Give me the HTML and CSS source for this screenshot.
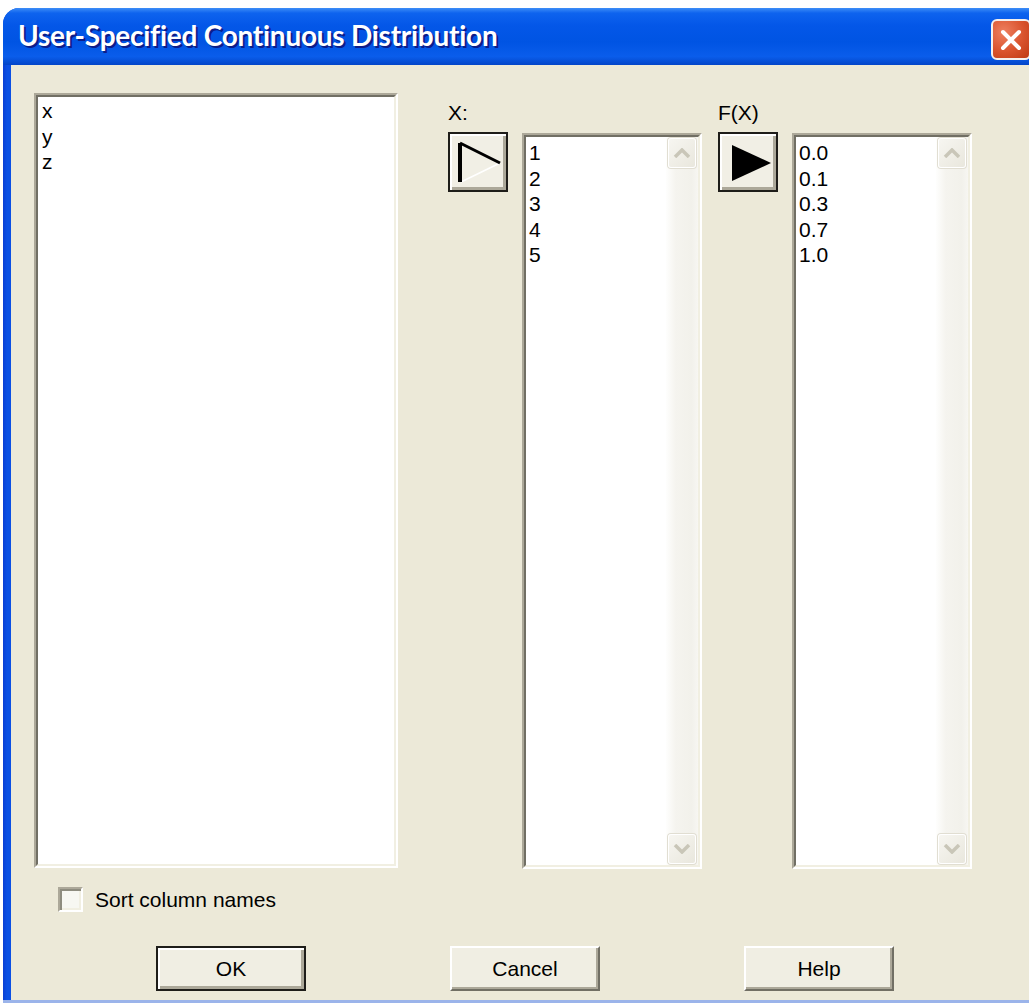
FILE: index.html
```html
<!DOCTYPE html>
<html lang="en">
<head>
<meta charset="utf-8">
<title>User-Specified Continuous Distribution</title>
<link rel="stylesheet" href="styles.css">
</head>
<body>
<div class="window">
  <div class="titlebar">
    <span class="title">User-Specified Continuous Distribution</span>
    <button class="close" aria-label="Close">
      <svg width="24" height="24" viewBox="0 0 24 24"><path d="M4 4 L20 20 M20 4 L4 20" stroke="#fff" stroke-width="4" stroke-linecap="round"/></svg>
    </button>
  </div>

  <div class="client">
    <div class="lists">
      <div class="well names">
        <div class="well-in">
          <div class="items items-names">
            <div class="item">x</div>
            <div class="item">y</div>
            <div class="item">z</div>
          </div>
        </div>
      </div>

      <div class="field field-x">
        <div class="label">X:</div>
        <div class="field-row">
          <button class="pick" aria-label="Select X">
            <svg width="56" height="56" viewBox="0 0 56 56">
              <path d="M11 48 L50 29" stroke="#fff" stroke-width="1.5"/>
              <path d="M10 9 L10 48" stroke="#000" stroke-width="4"/>
              <path d="M10 9 L50 29" stroke="#000" stroke-width="3"/>
            </svg>
          </button>
          <div class="well values">
            <div class="well-in">
              <div class="items items-values">
                <div class="item">1</div>
                <div class="item">2</div>
                <div class="item">3</div>
                <div class="item">4</div>
                <div class="item">5</div>
              </div>
              <div class="scrollbar">
                <div class="sb-btn"><svg width="18" height="10" viewBox="0 0 18 10"><polyline points="2,9 9,2 16,9" fill="none" stroke="#C9C6B8" stroke-width="3.5"/></svg></div>
                <div class="sb-btn"><svg width="18" height="10" viewBox="0 0 18 10"><polyline points="2,1 9,8 16,1" fill="none" stroke="#C9C6B8" stroke-width="3.5"/></svg></div>
              </div>
            </div>
          </div>
        </div>
      </div>

      <div class="field field-f">
        <div class="label">F(X)</div>
        <div class="field-row">
          <button class="pick" aria-label="Select F(X)">
            <svg width="56" height="56" viewBox="0 0 56 56">
              <path d="M12 11 L51 29 L12 47 Z" fill="#000"/>
            </svg>
          </button>
          <div class="well values">
            <div class="well-in">
              <div class="items items-values">
                <div class="item">0.0</div>
                <div class="item">0.1</div>
                <div class="item">0.3</div>
                <div class="item">0.7</div>
                <div class="item">1.0</div>
              </div>
              <div class="scrollbar">
                <div class="sb-btn"><svg width="18" height="10" viewBox="0 0 18 10"><polyline points="2,9 9,2 16,9" fill="none" stroke="#C9C6B8" stroke-width="3.5"/></svg></div>
                <div class="sb-btn"><svg width="18" height="10" viewBox="0 0 18 10"><polyline points="2,1 9,8 16,1" fill="none" stroke="#C9C6B8" stroke-width="3.5"/></svg></div>
              </div>
            </div>
          </div>
        </div>
      </div>
    </div>

    <label class="sort">
      <span class="check"></span>
      <span>Sort column names</span>
    </label>

    <div class="actions">
      <button class="btn btn-default">OK</button>
      <button class="btn">Cancel</button>
      <button class="btn">Help</button>
    </div>
  </div>
  <div class="frame-bottom"></div>
</div>
</body>
</html>
```
FILE: styles.css
```css
html, body {
  margin: 0;
  height: 100%;
  overflow: hidden;
  background: #fff;
}

body {
  font-family: "Liberation Sans", Arial, sans-serif;
  font-size: 21px;
  color: #000;
}

button {
  font: inherit;
  color: inherit;
  padding: 0;
  margin: 0;
}

/* window frame */
.window {
  margin: 8px -14px 0 3px;
  background: linear-gradient(to right, #0A3FD4, #0B50E4 4px);
  border-radius: 16px 16px 0 0;
}

.titlebar {
  height: 57px;
  box-sizing: border-box;
  display: flex;
  align-items: center;
  padding: 0 12px 4px 15px;
  border-radius: 16px 16px 0 0;
  background: linear-gradient(#3D8DF7 0%, #0E63EE 9%, #0457E8 30%, #0054E3 60%, #0A5DEB 85%, #0345C8 100%);
}

.title {
  font-family: Lato, "Liberation Sans", sans-serif;
  font-weight: 700;
  font-size: 28px;
  letter-spacing: -0.25px;
  color: #fff;
  text-shadow: 2px 2px 0 #0C1D8A;
  white-space: nowrap;
}

.close {
  margin-left: auto;
  align-self: flex-start;
  margin-top: 11px;
  width: 40px;
  height: 41px;
  box-sizing: border-box;
  border: 2px solid #F4F0EE;
  border-radius: 6px;
  background: radial-gradient(circle at 30% 30%, #EE8060, #D9532D 55%, #BF3A14);
  display: flex;
  align-items: center;
  justify-content: center;
}

.client {
  margin: 0 8px;
  height: 935px;
  box-sizing: border-box;
  padding-top: 28px;
  background: #ECE9D8;
}

.frame-bottom {
  height: 8px;
  background: #9BB4EA;
}

/* list boxes */
.lists {
  display: flex;
  align-items: flex-start;
  padding-left: 23px;
}

.well {
  box-sizing: border-box;
  border: 2px solid;
  border-color: #ACA899 #fff #fff #ACA899;
}

.well-in {
  height: 100%;
  box-sizing: border-box;
  border: 2px solid;
  border-color: #716F64 #F1EFE2 #F1EFE2 #716F64;
  background: #fff;
  display: flex;
}

.names {
  width: 364px;
  height: 775px;
  margin-right: 50px;
}

.items {
  flex: 1;
  line-height: 25.5px;
}

.items-names {
  padding: 1px 0 0 4px;
}

.items-values {
  padding: 3px 0 0 3px;
}

.field {
  margin-top: 7px;
}

.field-x {
  margin-right: 16px;
}

.label {
  line-height: 26px;
  margin-bottom: 6px;
}

.field-row {
  display: flex;
  align-items: flex-start;
  gap: 14px;
}

.pick {
  width: 60px;
  height: 60px;
  box-sizing: border-box;
  border: 2px solid #1E1D19;
  background: #F1EFE5;
  box-shadow: inset 2px 2px #fff, inset -3px -3px #ACA899;
  display: flex;
  align-items: center;
  justify-content: center;
}

.values {
  width: 180px;
  height: 736px;
  margin-top: 1px;
}

.scrollbar {
  width: 32px;
  background: linear-gradient(to right, #FEFEFD, #F5F4EF 30%, #F2F1EB 80%, #F7F6F2);
  display: flex;
  flex-direction: column;
  justify-content: space-between;
}

.sb-btn {
  width: 28px;
  height: 30px;
  margin: 1px 2px;
  box-sizing: border-box;
  border: 1px solid #fff;
  border-radius: 3px;
  background: linear-gradient(135deg, #F7F6F1, #E9E7DD);
  box-shadow: 0 0 0 1px #E1DED2;
  display: flex;
  align-items: center;
  justify-content: center;
}

/* checkbox */
.sort {
  display: flex;
  align-items: center;
  gap: 12px;
  height: 25px;
  margin: 18px 0 0 47px;
}

.check {
  width: 25px;
  height: 25px;
  box-sizing: border-box;
  border: 2px solid;
  border-color: #ACA899 #fff #fff #ACA899;
  box-shadow: inset 2px 2px #8E8C7F, inset -2px -2px #F1EFE2;
  background: #F7F7F2;
}

/* command buttons */
.actions {
  display: flex;
  gap: 144px;
  margin-top: 34px;
  padding-left: 145px;
}

.btn {
  width: 150px;
  height: 45px;
  box-sizing: border-box;
  background: #F0EEE3;
  border: 2px solid;
  border-color: #fff #716F64 #716F64 #fff;
  box-shadow: inset -2px -2px #ACA899;
  line-height: 1;
}

.btn-default {
  border-color: #1E1D19;
  box-shadow: inset 2px 2px #fff, inset -3px -3px #ACA899;
}
```
